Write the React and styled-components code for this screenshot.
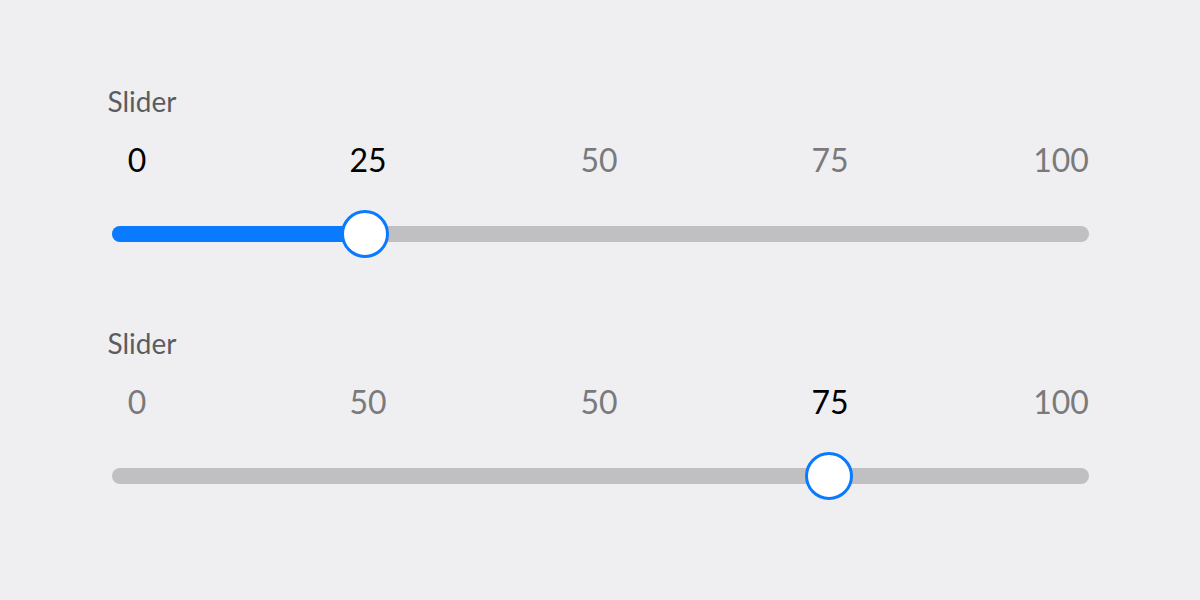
import styled, { createGlobalStyle } from "styled-components";

const GlobalStyle = createGlobalStyle`
    html, body {
        margin: 0;
        padding: 0;
        min-height: 100vh;
        background: #efeff2;
        font-family: Lato, "Open Sans", sans-serif;
    }
`

const Page = styled.main`
    width: 977px;
    margin: 0 auto;
    padding-top: 84px;
    display: flex;
    flex-direction: column;
    gap: 84px;
`

const Group = styled.section`
    display: flex;
    flex-direction: column;
`

const Title = styled.div`
    font-size: 28px;
    line-height: 34px;
    color: #5c5c5e;
    margin-left: -4px;
`

const Ticks = styled.div`
    width: 1155px;
    margin: 23px 0 0 -90px;
    display: grid;
    grid-template-columns: repeat(5, 1fr);
`

const Tick = styled.span`
    text-align: center;
    font-size: 32px;
    line-height: 38px;
    color: ${p => p.$active ? '#000' : '#7a7a7c'};
`

const Track = styled.div`
    position: relative;
    margin-top: 47px;
    height: 16px;
    border-radius: 8px;
    background: #c0c0c2;
`

const Fill = styled.div`
    height: 100%;
    border-radius: 8px;
    background: #0a7aff;
`

const Thumb = styled.div`
    position: absolute;
    top: 50%;
    width: 48px;
    height: 48px;
    box-sizing: border-box;
    border-radius: 50%;
    border: 3px solid #0a7aff;
    background: #fff;
    transform: translate(-50%, -50%);
`

// thumb travels between the first and last tick centres
const thumbX = v => 21 + v * 9.28

function Slider({ ticks, value, active, filled }){
    const x = thumbX(value)
    return(
        <Group>
            <Title>Slider</Title>
            <Ticks>
                {ticks.map((t, i) => (
                    <Tick key={i} $active={active.includes(i)}>{t}</Tick>
                ))}
            </Ticks>
            <Track>
                {filled && <Fill style={{ width: x }} />}
                <Thumb style={{ left: x }} />
            </Track>
        </Group>
    )
}

export default function App(){
    return(
        <>
            <GlobalStyle />
            <Page>
                <Slider ticks={[0, 25, 50, 75, 100]} value={25} active={[0, 1]} filled />
                <Slider ticks={[0, 50, 50, 75, 100]} value={75} active={[3]} />
            </Page>
        </>
    )
}
